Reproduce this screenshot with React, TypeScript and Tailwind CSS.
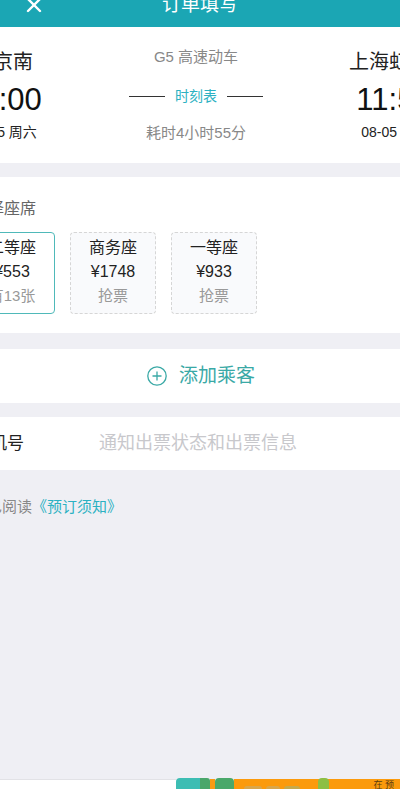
import { X } from "lucide-react";

const font = { fontFamily: '"Liberation Sans", "Noto Sans CJK SC", sans-serif' };

// 座席データ
const seats = [
  { name: "二等座", price: "¥553", note: "有13张", active: true },
  { name: "商务座", price: "¥1748", note: "抢票", active: false },
  { name: "一等座", price: "¥933", note: "抢票", active: false },
];

function Station({ name, time, date, shift }: { name: string; time: string; date: string; shift?: boolean }) {
  return (
    <div className="w-[90px] flex flex-col items-center whitespace-nowrap">
      <div className="mt-[21px] h-[28px] leading-[28px] text-[20px] text-[#222]">{name}</div>
      <div className={`mt-[6px] h-[36px] leading-[36px] text-[31px] text-[#111] ${shift ? "ml-[10px]" : ""}`}>{time}</div>
      <div className={`mt-[4px] h-[20px] leading-[20px] text-[14px] text-[#222] ${shift ? "ml-[12px]" : ""}`}>{date}</div>
    </div>
  );
}

export default function App() {
  return (
    <div style={font} className="w-[400px] h-[789px] flex flex-col overflow-hidden bg-[#efeff4]">
      {/* ヘッダー */}
      <div className="h-[27px] shrink-0 overflow-hidden bg-[#1ba6b4]">
        <div className="relative -mt-[17px] h-[44px] flex items-center justify-center">
          <X className="absolute left-[22px] text-white" size={24} strokeWidth={2.4} />
          <span className="text-[19px] text-white">订单填写</span>
        </div>
      </div>

      {/* 列車情報 */}
      <div className="h-[136px] shrink-0 bg-white overflow-hidden">
        <div className="w-[476px] -ml-[42px] flex">
          <Station name="南京南" time="07:00" date="08-05 周六" />
          <div className="flex-1 flex flex-col items-center">
            <div className="mt-[20px] leading-[20px] text-[15px] text-[#888]">G5 高速动车</div>
            <div className="mt-[19px] h-[20px] flex items-center gap-[10px]">
              <div className="w-[36px] h-px bg-[#333]" />
              <span className="text-[14px] leading-[20px] text-[#2bb1c2]">时刻表</span>
              <div className="w-[36px] h-px bg-[#333]" />
            </div>
            <div className="mt-[17px] leading-[20px] text-[15px] text-[#888]">耗时4小时55分</div>
          </div>
          <Station name="上海虹桥" time="11:55" date="08-05 周六" shift />
        </div>
      </div>

      {/* 座席選択 */}
      <div className="mt-[14px] h-[156px] shrink-0 bg-white overflow-hidden">
        <div className="-ml-[42px] pl-[14px]">
          <div className="mt-[21px] h-[22px] leading-[22px] text-[16px] text-[#666] whitespace-nowrap">选择座席</div>
          <div className="mt-[12px] flex gap-[15px] -ml-[3px]">
            {seats.map((s) => (
              <div
                key={s.name}
                className={`w-[86px] h-[82px] pt-[3px] rounded-[4px] flex flex-col items-center ${
                  s.active ? "border border-[#4fb9b9] bg-white" : "border border-dashed border-[#d6d6d6] bg-[#f9fafc]"
                }`}
              >
                <div className="leading-[24px] text-[16px] text-[#222]">{s.name}</div>
                <div className="leading-[24px] text-[16px] text-[#222]">{s.price}</div>
                <div className="leading-[24px] text-[15px] text-[#999]">{s.note}</div>
              </div>
            ))}
          </div>
        </div>
      </div>

      {/* 乗客追加 */}
      <div className="mt-[16px] h-[54px] shrink-0 bg-white flex items-center justify-center gap-[12px] pl-[2px]">
        <svg width="20" height="20" viewBox="0 0 20 20" fill="none" stroke="#3aa9a6" strokeWidth="1.3">
          <circle cx="10" cy="10" r="9.2" />
          <path d="M10 5.5v9M5.5 10h9" />
        </svg>
        <span className="text-[19px] text-[#3aa9a6]">添加乘客</span>
      </div>

      {/* 電話番号 */}
      <div className="mt-[14px] h-[53px] shrink-0 bg-white overflow-hidden flex items-center">
        <div className="-ml-[27px] w-[126px] text-[17px] text-[#222] whitespace-nowrap">手机号</div>
        <div className="text-[18px] text-[#c8c8cc] whitespace-nowrap">通知出票状态和出票信息</div>
      </div>

      {/* 同意 */}
      <div className="flex-1 overflow-hidden">
        <div className="mt-[27px] -ml-[28px] leading-[20px] text-[15px] text-[#888] whitespace-nowrap">
          我已阅读<span className="text-[#2bb1c2]">《预订须知》</span>
        </div>
      </div>

      {/* 下部バー */}
      <div className="h-[11px] shrink-0 flex items-end">
        <div className="w-[176px] h-[10px] bg-white border-t border-[#e2e2e6]" />
        <div className="w-[24px] h-[11px] rounded-tl-[4px] bg-[#3cbdb3]" />
        <div className="w-[10px] h-[11px] rounded-tr-[3px] bg-[#4aa66a]" />
        <div className="w-[5px] h-[10px] bg-[#f99b12]" />
        <div className="w-[19px] h-[11px] rounded-t-[4px] bg-[#4aa86a]" />
        <div className="flex-1 h-[10px] bg-[#fb9a0c] flex items-end pl-[10px] gap-[4px]">
          <div className="w-[18px] h-[3px] rounded-t-full bg-[#d9a64a]" />
          <div className="w-[14px] h-[3px] rounded-t-full bg-[#d9a64a]" />
          <div className="w-[16px] h-[3px] rounded-t-full bg-[#c5a94c]" />
          <div className="ml-[14px] w-[11px] h-[11px] rounded-t-[4px] bg-[#8cbf45]" />
          <div className="flex-1" />
          <span className="text-[9px] leading-[8px] text-[#5a3a10] pr-[6px]">在 预</span>
        </div>
      </div>
    </div>
  );
}
